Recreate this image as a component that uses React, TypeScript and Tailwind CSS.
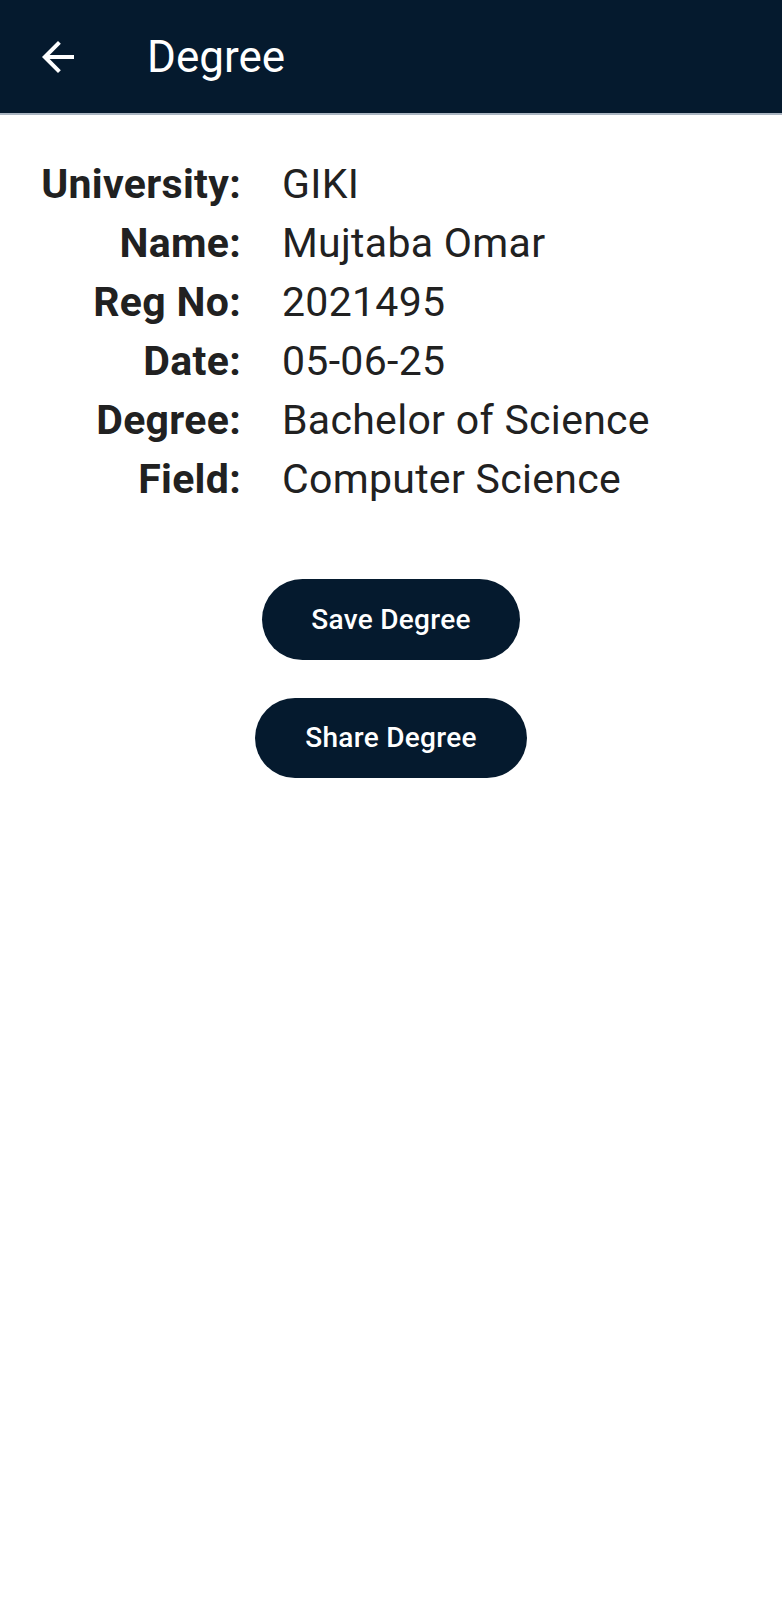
import React from "react";

const rows: [string, string][] = [
  ["University:", "GIKI"],
  ["Name:", "Mujtaba Omar"],
  ["Reg No:", "2021495"],
  ["Date:", "05-06-25"],
  ["Degree:", "Bachelor of Science"],
  ["Field:", "Computer Science"],
];

export default function App() {
  return (
    <div className="min-h-[1600px] bg-white font-['Roboto',sans-serif]">
      <header className="flex h-[115px] items-center border-b-2 border-[#aab5c1] bg-[#051a2e] pl-[34px]">
        <svg viewBox="0 0 24 24" className="h-12 w-12 fill-white" aria-hidden="true">
          <path d="M20 11H7.83l5.59-5.59L12 4l-8 8 8 8 1.41-1.41L7.83 13H20v-2z" />
        </svg>
        <h1 className="ml-[65px] text-[44px] font-normal leading-none text-white">
          Degree
        </h1>
      </header>

      <main className="pt-[40px]">
        <div className="flex flex-col">
          {rows.map(([label, value]) => (
            <div key={label} className="flex h-[59px] items-center text-[41px] leading-[59px] text-[#212121]">
              <span className="w-[241px] shrink-0 text-right font-bold tracking-[0.3px]">{label}</span>
              <span className="ml-[41px] font-normal tracking-[0.3px]">{value}</span>
            </div>
          ))}
        </div>

        <div className="mt-[70px] flex flex-col items-center gap-[38px]">
          <button className="flex h-[81px] w-[258px] items-center justify-center rounded-full bg-[#051a2e] text-[28px] font-medium tracking-[0.3px] text-white">
            Save Degree
          </button>
          <button className="flex h-[80px] w-[272px] items-center justify-center rounded-full bg-[#051a2e] text-[28px] font-medium tracking-[0.3px] text-white">
            Share Degree
          </button>
        </div>
      </main>
    </div>
  );
}
